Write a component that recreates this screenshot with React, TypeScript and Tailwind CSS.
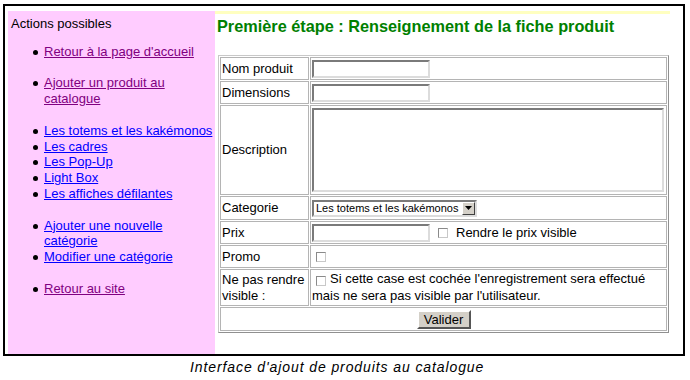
const font = "font-['Liberation_Sans',Arial,sans-serif]"

type link = { label: string[], visited?: boolean }

const groups: link[][] = [
    [{ label: ["Retour à la page d'accueil"], visited: true }],
    [{ label: ["Ajouter un produit au", "catalogue"], visited: true }],
    [
        { label: ["Les totems et les kakémonos"] },
        { label: ["Les cadres"] },
        { label: ["Les Pop-Up"] },
        { label: ["Light Box"] },
        { label: ["Les affiches défilantes"] },
    ],
    [
        { label: ["Ajouter une nouvelle", "catégorie"] },
        { label: ["Modifier une catégorie"] },
    ],
    [{ label: ["Retour au site"], visited: true }],
]

const field = "border-2 border-t-[#7a7a7a] border-l-[#7a7a7a] border-r-[#dcdcdc] border-b-[#dcdcdc] bg-white"

function Box() {
    return <span className="inline-block w-[10px] h-[10px] border border-t-[#8a8a8a] border-l-[#8a8a8a] border-r-[#c8c8c8] border-b-[#c8c8c8] bg-white align-middle" />
}

function Sidebar() {
    return <div className="w-[207px] bg-[#ffccff] text-[13px] leading-[15.8px] pt-[5px] pl-[3px] text-black">
        <p className="mb-[12px]">Actions possibles</p>
        <div className="flex flex-col gap-[15.8px]">
            {groups.map((g, i) => <ul key={i} className="flex flex-col">
                {g.map(item => <li key={item.label[0]} className="flex">
                    <span className="w-[33px] flex justify-end pr-[6px] pt-[6px]">
                        <span className="block w-[5px] h-[5px] rounded-full bg-black" />
                    </span>
                    <span className={item.visited ? "text-[#800080] underline" : "text-[#0000ff] underline"}>
                        {item.label.map(l => <span key={l} className="block">{l}</span>)}
                    </span>
                </li>)}
            </ul>)}
        </div>
    </div>
}

function Row({ label, h, children }: { label: React.ReactNode, h: string, children: React.ReactNode }) {
    return <tr>
        <td className={`${h} w-[89px] border border-[#b4b4b4] px-[1px] py-0 align-middle`}>{label}</td>
        <td className={`${h} border border-[#b4b4b4] px-[1px] py-0 align-middle`}>{children}</td>
    </tr>
}

function Form() {
    return <table className="ml-[3px] mt-[20px] w-[451px] border border-t-[#c8c8c8] border-l-[#c8c8c8] border-r-[#909090] border-b-[#909090] border-separate border-spacing-[1px] text-[13px] leading-[15.8px]">
        <tbody>
            <Row label="Nom produit" h="h-[23px]">
                <div className={`${field} w-[118px] h-[18px]`} />
            </Row>
            <Row label="Dimensions" h="h-[23px]">
                <div className={`${field} w-[118px] h-[18px]`} />
            </Row>
            <Row label="Description" h="h-[90px]">
                <div className={`${field} w-[352px] h-[84px]`} />
            </Row>
            <Row label="Categorie" h="h-[24px]">
                <div className={`${field} w-[165px] h-[17px] flex items-center justify-between text-[11px] leading-[13px]`}>
                    <span className="pl-[2px]">Les totems et les kakémonos</span>
                    <span className="w-[13px] h-[13px] bg-[#d4d0c8] border border-t-white border-l-white border-r-[#404040] border-b-[#404040] flex items-center justify-center">
                        <svg width="7" height="4" viewBox="0 0 7 4"><path d="M0 0h7L3.5 4z" fill="#000" /></svg>
                    </span>
                </div>
            </Row>
            <Row label="Prix" h="h-[23px]">
                <div className="flex items-center">
                    <div className={`${field} w-[118px] h-[18px]`} />
                    <span className="ml-[8px] flex"><Box /></span>
                    <span className="ml-[8px]">Rendre le prix visible</span>
                </div>
            </Row>
            <Row label="Promo" h="h-[23px]">
                <span className="ml-[4px] flex"><Box /></span>
            </Row>
            <Row label={<>Ne pas rendre<br />visible :</>} h="h-[37px]">
                <p><span className="inline-block ml-[4px] mr-[4px] align-[-1px]"><Box /></span>Si cette case est cochée l'enregistrement sera effectué mais ne sera pas visible par l'utilisateur.</p>
            </Row>
            <tr>
                <td colSpan={2} className="h-[24px] border border-[#b4b4b4] p-0 align-middle text-center">
                    <span className="inline-block w-[54px] h-[19px] leading-[15px] bg-[#d4d0c8] border-2 border-t-white border-l-white border-r-[#555] border-b-[#555] text-[13px]">Valider</span>
                </td>
            </tr>
        </tbody>
    </table>
}

export default function App() {
    return <div className={`${font} w-[690px] h-[380px] bg-white pt-[4px] pl-[3px] text-black`}>
        <div className="w-[682px] h-[352px] border-2 border-black flex pt-[5px] pl-[3px]">
            <Sidebar />
            <div className="flex flex-col">
                <div className="w-[455px] h-[3px] bg-[#ffffc0]" />
                <h1 className="mt-[3px] ml-[2px] text-[16.3px] leading-[18px] font-bold text-[#008000]">Première étape : Renseignement de la fiche produit</h1>
                <Form />
            </div>
        </div>
        <p className="mt-[3px] pl-[187px] text-[14px] leading-[16px] tracking-[0.9px] italic">Interface d'ajout de produits au catalogue</p>
    </div>
}
